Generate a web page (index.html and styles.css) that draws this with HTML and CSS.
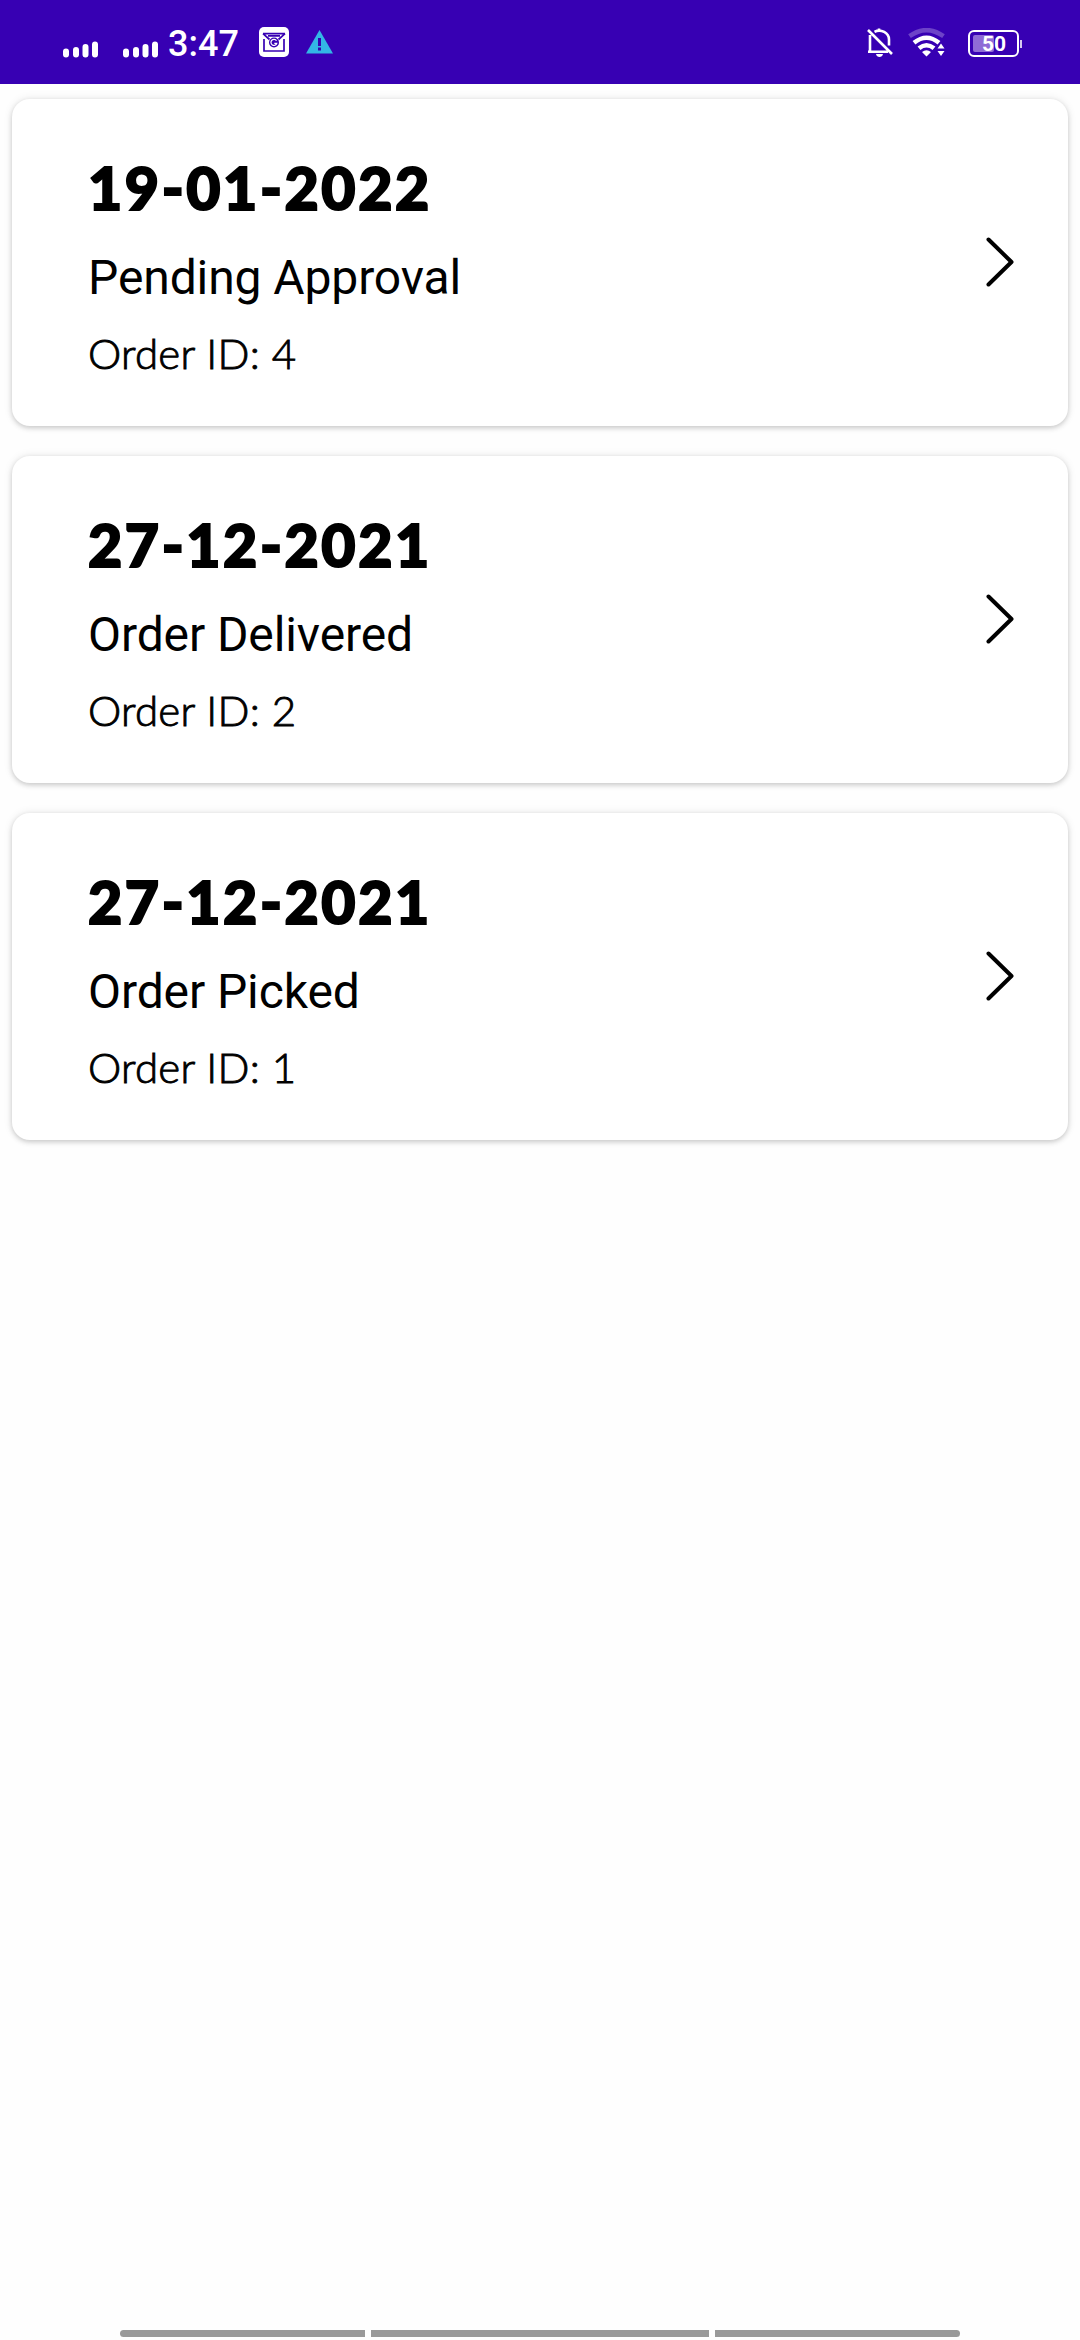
FILE: index.html
```html
<!DOCTYPE html>
<html lang="en">
<head>
<meta charset="utf-8">
<title>Orders</title>
<link rel="stylesheet" href="styles.css">
</head>
<body>
<div class="screen">
  <header class="status-bar">
    <div class="status-left">
      <svg class="signal" width="36" height="18" viewBox="0 0 36 18"><path d="M3 11.500V14.500M13 10V14.500M22.500 7V14.500M32 4.500V14.500"/></svg>
      <svg class="signal" width="36" height="18" viewBox="0 0 36 18"><path d="M3 11.500V14.500M13 10V14.500M22.500 7V14.500M32 4.500V14.500"/></svg>
      <span class="clock">3:47</span>
      <svg class="mail" width="30" height="30" viewBox="0 0 30 30">
        <rect width="30" height="30" rx="5" fill="#fff"/>
        <path d="M4 6.700H26M4 6.700L10.500 12.500M26 6.700L19.500 12.500M9 8.800H21M5 12V24H25V12" fill="none" stroke="#3700b3" stroke-width="1.700"/>
        <circle cx="15" cy="15.500" r="5" fill="#3700b3"/>
        <path d="M17.500 13.800A3 3 0 1 0 17.800 16.300H15.300" fill="none" stroke="#fff" stroke-width="1.200"/>
      </svg>
      <svg class="warning" width="27" height="24" viewBox="0 0 27 24"><path d="M13.500 0L27 23.500H0Z" fill="#33b5e5"/><path d="M12 8H15V16H12ZM12 17.500H15V20.500H12Z" fill="#3700b3"/></svg>
    </div>
    <div class="status-right">
      <svg width="28" height="30" viewBox="0 0 28 30" fill="none" stroke="#fff" stroke-width="2.600">
        <path d="M4 7V23.500M2 23.700H22M8.500 3.800C15 .5 23 5 23 11.500V17.500M13 3V.5M2 2L26 26"/>
        <path d="M10 26H17C16.500 30 10.500 30 10 26Z" fill="#fff" stroke="none"/>
      </svg>
      <svg class="wifi" width="38" height="30" viewBox="0 0 38 30" fill="none" stroke="#fff">
        <path d="M1.500 8.200Q18.500-4 35.500 8.200" stroke="#6d43c8" stroke-width="4.500"/>
        <path d="M6 14.800Q18.500 4.800 31 14.800M11 20.300Q18.500 14.200 26 20.300" stroke-width="4.500"/>
        <path d="M14 24Q18.500 20.500 23 24L18.500 28.500ZM29.500 20.500L33 15.500L36.500 20.500ZM29.500 23L33 28L36.500 23Z" fill="#fff" stroke="none"/>
      </svg>
      <div class="battery"><div class="battery-body"><div class="battery-fill"></div><span class="battery-text">50</span></div><div class="battery-cap"></div></div>
    </div>
  </header>
  <main class="orders">
    <article class="order">
      <div class="details"><h2 class="date">19-01-2022</h2><p class="state">Pending Approval</p><p class="order-id">Order ID: 4</p></div>
      <svg class="chevron" width="28" height="50" viewBox="0 0 28 50"><path d="M2.500 2.500L25.500 25L2.500 47.500"/></svg>
    </article>
    <article class="order">
      <div class="details"><h2 class="date">27-12-2021</h2><p class="state">Order Delivered</p><p class="order-id">Order ID: 2</p></div>
      <svg class="chevron" width="28" height="50" viewBox="0 0 28 50"><path d="M2.500 2.500L25.500 25L2.500 47.500"/></svg>
    </article>
    <article class="order">
      <div class="details"><h2 class="date">27-12-2021</h2><p class="state">Order Picked</p><p class="order-id">Order ID: 1</p></div>
      <svg class="chevron" width="28" height="50" viewBox="0 0 28 50"><path d="M2.500 2.500L25.500 25L2.500 47.500"/></svg>
    </article>
  </main>
  <nav class="gesture-bar"><span class="side"></span><span class="middle"></span><span class="side"></span></nav>
</div>
</body>
</html>
```
FILE: styles.css
```css
* { box-sizing: border-box; }
body { margin: 0; background: #fefefe; color: #000; }
.screen { width: 1080px; height: 2340px; display: flex; flex-direction: column; }
.status-bar { height: 84px; background: #3700b3; display: flex; justify-content: space-between; padding: 0 58px 0 63px; }
.status-left, .status-right { display: flex; align-items: flex-start; }
.signal { margin: 39.500px 24px 0 0; }
.signal + .signal { margin-right: 0; }
.signal path { fill: none; stroke: #fff; stroke-width: 6; stroke-linecap: round; }
.clock { font: 500 36px/42px Roboto, sans-serif; color: #fff; margin: 23px 0 0 9px; width: 72px; }
.mail { margin: 27px 0 0 19px; }
.warning { margin: 30px 0 0 17px; }
.status-right { padding-top: 28px; }
.wifi { margin-left: 14px; }
.battery { display: flex; align-items: center; margin: 2px 0 0 22px; }
.battery-body { width: 51px; height: 27px; border: 2px solid #fff; border-radius: 6px; display: grid; align-items: center; padding: 0 3px; }
.battery-fill, .battery-text { grid-area: 1 / 1; }
.battery-fill { width: 21px; height: 17px; border-radius: 2px; background: #8f6bd6; }
.battery-text { font: 700 21px/21px Roboto, sans-serif; color: #fff; padding: 1px 0 0 9px; }
.battery-cap { width: 2px; height: 8px; margin-left: 1px; background: #d5c8ef; }
.orders { padding: 15px 12px 0; display: flex; flex-direction: column; gap: 30px; flex: 1; }
.order { height: 327px; border-radius: 18px; background: #fff; box-shadow: 0 2px 5px rgba(0,0,0,.17), 0 0 10px rgba(0,0,0,.09); display: flex; justify-content: space-between; padding: 0 54px 0 76px; }
.details { padding-top: 51px; }
.date, .state, .order-id { margin: 0; white-space: nowrap; }
.date { font: 900 59px/75px Lato, sans-serif; letter-spacing: 2.600px; -webkit-text-stroke: 2px #000; }
.state { font: 400 48px/56px Roboto, sans-serif; letter-spacing: -.1px; margin-top: 25px; }
.order-id { font: 300 42px/53px Lato, sans-serif; letter-spacing: .25px; margin-top: 21px; -webkit-text-stroke: .9px #000; }
.chevron { margin-top: 138px; }
.chevron path { fill: none; stroke: #000; stroke-width: 4; stroke-linecap: round; stroke-linejoin: round; }
.gesture-bar { display: flex; gap: 6px; justify-content: center; padding-bottom: 3px; }
.gesture-bar span { height: 7px; background: #999; }
.side { width: 245px; }
.side:first-child { border-radius: 4px 0 0 4px; }
.side:last-child { border-radius: 0 4px 4px 0; }
.middle { width: 338px; }
```
